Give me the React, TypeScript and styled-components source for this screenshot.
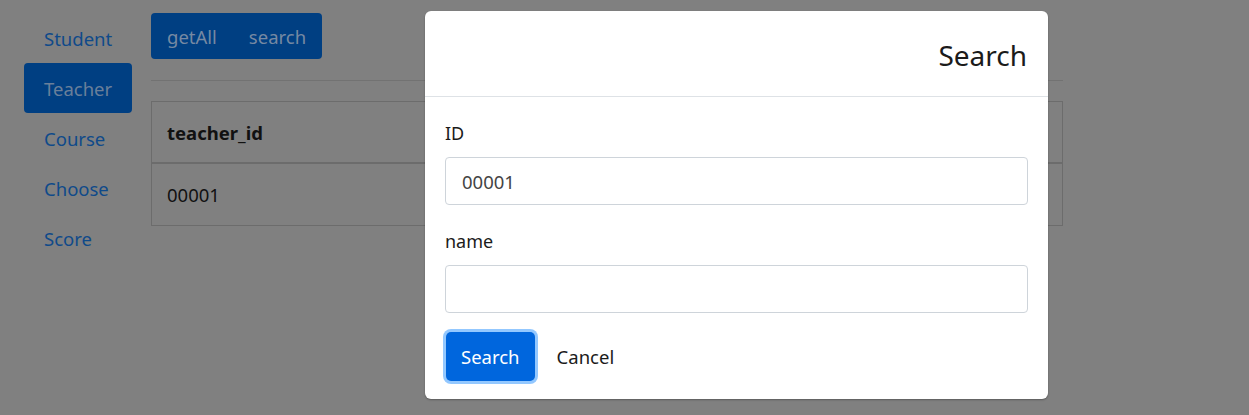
import React from "react"
import styled, { createGlobalStyle } from "styled-components"

const GlobalStyle = createGlobalStyle`
  html, body {
    margin: 0;
    padding: 0;
    background: #808080;
    font-family: "Noto Sans", "Open Sans", sans-serif;
    font-size: 18px;
    color: #111;
  }
  * {
    box-sizing: border-box;
  }
`

const Page = styled.div`
  display: flex;
  align-items: flex-start;
  padding: 13px 0 0 24px;
  height: 415px;
  background: #808080;
`

const SideNav = styled.nav`
  display: flex;
  flex-direction: column;
  width: 108px;
`

type PillProps = {
  active?: boolean
}

const Pill = styled.a<PillProps>`
  display: flex;
  align-items: center;
  height: 50px;
  padding: 0 20px;
  border-radius: 4px;
  font-size: 18.5px;
  text-decoration: none;
  color: ${({ active }) => (active ? "#6a7f9a" : "#0f4a8a")};
  background: ${({ active }) => (active ? "#003f82" : "transparent")};
`

const Main = styled.main`
  width: 912px;
  margin-left: 19px;
`

const BtnGroup = styled.div`
  display: inline-flex;
  height: 46px;
  border-radius: 4px;
  background: #003f82;
  overflow: hidden;
`

const GroupBtn = styled.span`
  display: flex;
  align-items: center;
  padding: 0 16px;
  font-size: 18.5px;
  color: #7689a2;
`

const Rule = styled.hr`
  margin: 21px 0 20px;
  border: 0;
  border-top: 1px solid #727272;
`

const Table = styled.div`
  border: 1px solid #6c6c6c;
`

type RowProps = {
  head?: boolean
}

const Row = styled.div<RowProps>`
  display: flex;
  align-items: center;
  height: ${({ head }) => (head ? "62px" : "61px")};
  padding: 0 15px;
  font-size: 18.5px;
  font-weight: ${({ head }) => (head ? 700 : 400)};
  color: #111;
  border-bottom: ${({ head }) => (head ? "2px solid #6c6c6c" : "0")};
`

const Modal = styled.div`
  position: absolute;
  left: 425px;
  top: 11px;
  width: 623px;
  height: 388px;
  background: #fff;
  border-radius: 6px;
  box-shadow: 0 1px 2px rgba(0, 0, 0, 0.3);
  display: flex;
  flex-direction: column;
`

const ModalHeader = styled.header`
  display: flex;
  justify-content: flex-end;
  align-items: center;
  height: 86px;
  padding: 2px 21px 0 20px;
  border-bottom: 1px solid #dee2e6;
`

const Title = styled.h2`
  margin: 0;
  font-size: 28px;
  font-weight: 400;
  color: #1b1b1b;
`

const ModalBody = styled.div`
  display: flex;
  flex-direction: column;
  padding: 24px 20px 0 20px;
`

const Label = styled.label`
  font-size: 18px;
  color: #1b1b1b;
  line-height: 24px;
  margin-bottom: 12px;
`

const Input = styled.div`
  display: flex;
  align-items: center;
  height: 48px;
  padding: 0 16px;
  border: 1px solid #ced4da;
  border-radius: 4px;
  font-size: 18.5px;
  color: #444;
  margin-bottom: 24px;
`

const Actions = styled.div`
  display: flex;
  align-items: center;
  gap: 22px;
  margin-top: -5px;
`

const PrimaryBtn = styled.button`
  height: 49px;
  padding: 0 15px;
  border: 0;
  border-radius: 5px;
  background: #0066dd;
  color: #fff;
  font-family: inherit;
  font-size: 18.5px;
  box-shadow: 0 0 0 3px #93c8ff;
  margin-left: 1px;
`

const LinkBtn = styled.button`
  border: 0;
  background: transparent;
  padding: 0;
  font-family: inherit;
  font-size: 18.5px;
  color: #1b1b1b;
`

const App: React.FC = () => {
  return (
    <>
      <GlobalStyle />
      <Page>
        <SideNav>
          <Pill>Student</Pill>
          <Pill active>Teacher</Pill>
          <Pill>Course</Pill>
          <Pill>Choose</Pill>
          <Pill>Score</Pill>
        </SideNav>
        <Main>
          <BtnGroup>
            <GroupBtn>getAll</GroupBtn>
            <GroupBtn>search</GroupBtn>
          </BtnGroup>
          <Rule />
          <Table>
            <Row head>teacher_id</Row>
            <Row>00001</Row>
          </Table>
        </Main>
      </Page>
      <Modal>
        <ModalHeader>
          <Title>Search</Title>
        </ModalHeader>
        <ModalBody>
          <Label>ID</Label>
          <Input>00001</Input>
          <Label>name</Label>
          <Input />
          <Actions>
            <PrimaryBtn>Search</PrimaryBtn>
            <LinkBtn>Cancel</LinkBtn>
          </Actions>
        </ModalBody>
      </Modal>
    </>
  )
}

export default App
